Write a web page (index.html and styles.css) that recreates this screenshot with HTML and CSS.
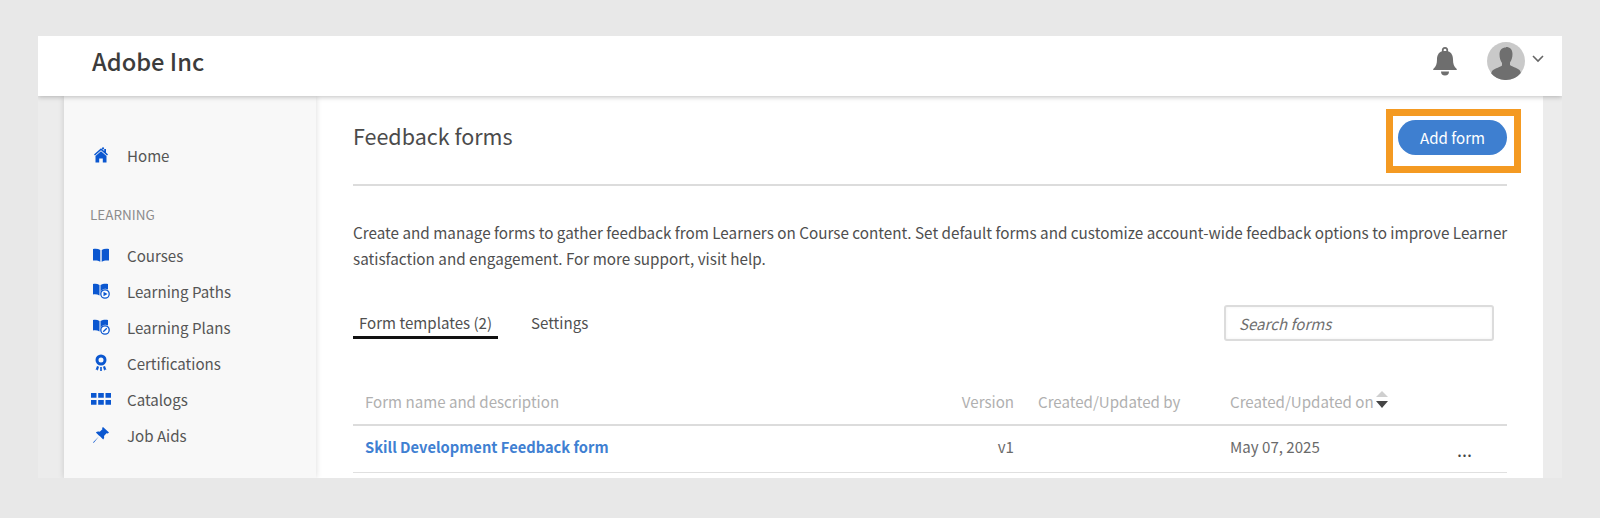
FILE: index.html
```html
<!DOCTYPE html>
<html>
  <head>
    <meta charset="utf-8">
    <title>Feedback forms</title>
    <link rel="stylesheet" href="styles.css">
  </head>
  <body>
    <div class="app">
      <header class="topbar">
        <div class="brand">Adobe Inc</div>
        <svg class="bell" viewBox="0 0 24 30" width="24" height="30">
          <path fill="#6e6e6e" d="M12 0a3.2 3.2 0 0 1 3 4.300c3.600 1.200 5 4.400 5 8.200 0 4.500 1 7 3.500 9.200.5.500.5 1.300-.2 1.300H.7c-.7 0-.7-.8-.2-1.300C3 19.500 4 17 4 12.500c0-3.800 1.400-7 5-8.200A3.200 3.200 0 0 1 12 0zm0 1.800a1.400 1.400 0 0 0-1.200 2.100h2.400A1.400 1.400 0 0 0 12 1.800zM8 24.500h8a4 4 0 0 1-8 0z"/>
        </svg>
        <svg class="avatar" viewBox="0 0 38 38" width="38" height="38">
          <circle cx="19" cy="19" r="19" fill="#c9c9c9"/>
          <path fill="#6f6f6f" d="M19 5c4 0 6.500 2.500 6.500 7 0 3.500-1 6.500-2.500 8.500v2.500c1 1.500 7 2.500 9.500 5 .8.800 1.200 2 1.300 3A19 19 0 0 1 19 38a19 19 0 0 1-14.800-6.500c.1-1 .5-2.200 1.300-3 2.500-2.500 8.500-3.500 9.500-5v-2.500c-1.500-2-2.500-5-2.500-8.500 0-4.500 2.500-7 6.500-7z"/>
        </svg>
        <svg class="chevron" viewBox="0 0 12 8" width="12" height="8">
          <path fill="none" stroke="#666" stroke-width="1.600" d="M1 1l5 5 5-5"/>
        </svg>
      </header>
      <div class="frame">
        <nav class="sidebar">
          <a class="nav-item">
            <span class="nav-icon">
              <svg viewBox="0 0 14 16" width="14" height="16"><path fill="#0b57d0" d="M7 4.200L1.500 9v6.500h3.700v-4h3.600v4h3.700V9zM7 1.200L0 7.400l1 1.100 6-5.300 6 5.300 1-1.100-2-1.800V2h-1.800v2zM9 .2a1.100 1.100 0 1 0 .1 0z"/></svg>
            </span>
            Home
          </a>
          <div class="nav-label">LEARNING</div>
          <a class="nav-item">
            <span class="nav-icon">
              <svg viewBox="0 0 16 14" width="16" height="14"><path fill="#0b57d0" d="M0 1c2.800-.6 5.300-.3 7.300 1v11.800C5.300 12.500 2.800 12.200 0 12.600zM16 1c-2.800-.6-5.300-.3-7.300 1v11.800c2-1.300 4.500-1.600 7.300-1.200z"/></svg>
            </span>
            Courses
          </a>
          <a class="nav-item">
            <span class="nav-icon">
              <svg viewBox="0 0 17 16" width="17" height="16"><path fill="#0b57d0" d="M0 1c2.400-.5 4.600-.2 6.500.9v10.600C4.600 11.300 2.400 11 0 11.400zM15 1v5.500a5 5 0 0 0-7.500 2.500V1.900C9.500.8 12.400.5 15 1z"/><circle cx="12" cy="11" r="4.200" fill="#fff" stroke="#0b57d0" stroke-width="1.300"/><path fill="#0b57d0" d="M10.500 8.800l4 2.200-4 2.200z"/></svg>
            </span>
            Learning Paths
          </a>
          <a class="nav-item">
            <span class="nav-icon">
              <svg viewBox="0 0 17 16" width="17" height="16"><path fill="#0b57d0" d="M0 1c2.400-.5 4.600-.2 6.500.9v10.600C4.600 11.300 2.400 11 0 11.400zM15 1v5.500a5 5 0 0 0-7.500 2.500V1.900C9.500.8 12.400.5 15 1z"/><circle cx="12" cy="11" r="4.200" fill="#fff" stroke="#0b57d0" stroke-width="1.300"/><path stroke="#0b57d0" stroke-width="1.300" d="M10.200 12.800l3.600-3.600"/></svg>
            </span>
            Learning Plans
          </a>
          <a class="nav-item">
            <span class="nav-icon">
              <svg viewBox="0 0 14 18" width="14" height="18"><circle cx="7" cy="6" r="4" fill="none" stroke="#0b57d0" stroke-width="3"/><path fill="#0b57d0" d="M3 12l2 .8-1.200 4-.8-1.200-1.400.4zM11 12l-2 .8 1.200 4 .8-1.200 1.400.4zM6.200 13h1.600v4H6.200z"/></svg>
            </span>
            Certifications
          </a>
          <a class="nav-item">
            <span class="nav-icon">
              <svg viewBox="0 0 20 12" width="20" height="12"><path fill="#0b57d0" d="M0 0h5.500v4.700H0zM7.200 0h5.600v4.700H7.200zM14.500 0H20v4.700h-5.500zM0 7h5.500v4.700H0zM7.200 7h5.600v4.700H7.200zM14.500 7H20v4.700h-5.500z"/></svg>
            </span>
            Catalogs
          </a>
          <a class="nav-item">
            <span class="nav-icon">
              <svg viewBox="0 0 16 16" width="16" height="16"><path fill="#0b57d0" d="M10 0l6 5.500-1.200 1-1.300-.3-2.500 2.700c.4 1.500.1 2.700-.8 3.600L6.500 8.800 1 15.500l-1 .5.400-1 6-6-3.500-3.600c1-.9 2.200-1.200 3.800-.7l2.700-2.400-.3-1.300z"/></svg>
            </span>
            Job Aids
          </a>
        </nav>
        <main class="content">
          <div class="page-head">
            <h1>Feedback forms</h1>
            <button class="add-btn">Add form</button>
          </div>
          <p class="intro">Create and manage forms to gather feedback from Learners on Course content. Set default forms and customize account-wide feedback options to improve Learner satisfaction and engagement. For more support, visit help.</p>
          <div class="tabbar">
            <a class="tab active">Form templates (2)</a>
            <a class="tab">Settings</a>
            <input class="search" type="text" placeholder="Search forms">
          </div>
          <div class="row thead">
            <div class="col-name">Form name and description</div>
            <div class="col-version">Version</div>
            <div class="col-by">Created/Updated by</div>
            <div class="col-on">Created/Updated on<span class="sort"><i class="up"></i><i class="down"></i></span></div>
            <div></div>
          </div>
          <div class="row tbody">
            <div class="col-name"><a class="form-link">Skill Development Feedback form</a></div>
            <div class="col-version">v1</div>
            <div class="col-by"></div>
            <div class="col-on">May 07, 2025</div>
            <div class="col-more">...</div>
          </div>
        </main>
      </div>
    </div>
  </body>
</html>
```

FILE: styles.css
```css
html, body {
  margin: 0;
  height: 518px;
  overflow: hidden;
}
body {
  background-color: #e8e8e8;
  color: #505050;
  font-family: "Noto Sans CJK SC", "Open Sans", sans-serif;
  font-size: 15.100px;
  padding: 36px 38px 0;
  box-sizing: border-box;
}
.app {
  height: 442px;
  overflow: hidden;
  display: flex;
  flex-direction: column;
}
.topbar {
  height: 60px;
  flex: none;
  box-sizing: border-box;
  background: #fff;
  display: flex;
  align-items: center;
  padding: 0 0 10px 54px;
  box-shadow: 0 1px 5px rgba(0, 0, 0, .25);
  position: relative;
  z-index: 2;
}
.brand {
  font-size: 23.700px;
  font-weight: 500;
  color: #3c3c3c;
  line-height: 40px;
  flex: 1;
}
.bell {
  margin-right: 30px;
  margin-top: 1px;
}
.chevron {
  margin: 0 18px 4px 7px;
}
.frame {
  flex: 1;
  display: flex;
  background: #ececec;
  padding: 0 19px 0 26px;
}
.sidebar {
  width: 252px;
  flex: none;
  background: #f8f8f8;
  padding-top: 41px;
  box-shadow: 0 0 6px rgba(0, 0, 0, .15);
  box-sizing: border-box;
  position: relative;
}
.nav-item {
  display: flex;
  align-items: center;
  height: 36px;
  color: #555;
}
.nav-icon {
  width: 63px;
  padding: 0 16px 0 27px;
  box-sizing: border-box;
  display: flex;
  flex: none;
  justify-content: center;
}
.nav-label {
  font-size: 13.500px;
  color: #8c8c8c;
  line-height: 18px;
  margin: 32px 0 14px 26px;
}
.content {
  flex: 1;
  background: #fff;
  padding: 0 36px 0 37px;
}
.page-head {
  height: 90px;
  display: flex;
  align-items: center;
  justify-content: space-between;
  border-bottom: 2px solid #dcdcdc;
  box-sizing: border-box;
  padding-bottom: 6px;
}
h1 {
  margin: 0 0 4px;
  font-size: 21.500px;
  font-weight: 400;
  color: #4b4b4b;
}
.add-btn {
  position: relative;
  width: 109px;
  height: 35px;
  border: 0;
  border-radius: 18px;
  background: #3e7fd0;
  color: #fff;
  font-family: inherit;
  font-size: 15.100px;
  padding: 0;
}
.add-btn::after {
  content: "";
  position: absolute;
  left: -12px;
  right: -14px;
  top: -11px;
  bottom: -18px;
  border: 7px solid #f49a22;
}
.intro {
  margin: 34px -2px 0 0;
  font-size: 15.250px;
  line-height: 25.500px;
  color: #4f4f4f;
}
.tabbar {
  display: flex;
  align-items: center;
  height: 36px;
  margin-top: 34px;
}
.tab {
  line-height: 24px;
  color: #505050;
  margin-right: 27px;
  padding: 3px 6px 2px;
  border-bottom: 3px solid transparent;
}
.tab.active {
  border-bottom-color: #111;
}
.search {
  margin-left: auto;
  margin-right: 13px;
  width: 270px;
  height: 36px;
  box-sizing: border-box;
  border: 2px solid #dcdcdc;
  border-radius: 3px;
  padding: 0 13px;
  font-family: inherit;
  font-size: 15.100px;
  font-style: italic;
  background: #fff;
  box-shadow: inset 0 0 3px rgba(0, 0, 0, .06);
}
.search::placeholder {
  color: #707070;
  opacity: 1;
}
.row {
  display: grid;
  grid-template-columns: 587px 74px 192px 227px 1fr;
  align-items: center;
  box-sizing: border-box;
}
.col-name {
  padding-left: 12px;
}
.col-version {
  text-align: right;
}
.col-by {
  margin-left: 24px;
  white-space: nowrap;
}
.col-on {
  margin-left: 24px;
  white-space: nowrap;
  display: flex;
  align-items: center;
}
.thead {
  margin-top: 36px;
  height: 49px;
  color: #b0b0b0;
  border-bottom: 2px solid #dcdcdc;
}
.tbody {
  height: 47px;
  padding-bottom: 7px;
  color: #6a6a6a;
  border-bottom: 1px solid #e0e0e0;
}
.form-link {
  color: #3f80d2;
  font-weight: 700;
  font-size: 14.700px;
  white-space: nowrap;
}
.col-more {
  font-size: 18px;
  color: #444;
  line-height: 18px;
  padding: 7px 0 0 24px;
}
.sort {
  display: inline-flex;
  flex-direction: column;
  flex: none;
  gap: 4px;
  margin: 0 0 2px 2px;
}
.sort i {
  display: block;
  width: 0;
  height: 0;
  border-left: 6px solid transparent;
  border-right: 6px solid transparent;
}
.sort .up {
  border-bottom: 6px solid #cfcfcf;
}
.sort .down {
  border-top: 7px solid #444;
}
```
